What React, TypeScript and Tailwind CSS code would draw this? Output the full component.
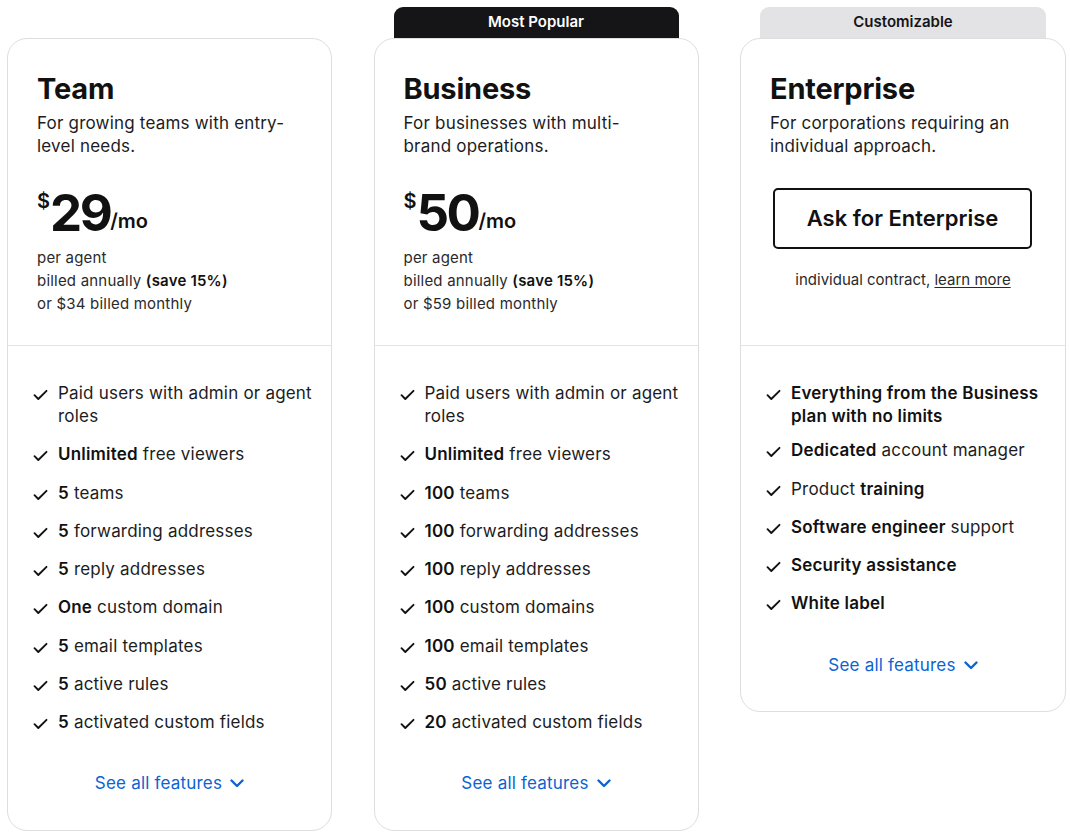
import { ReactNode } from "react";

type Plan = {
  name: string;
  desc: ReactNode;
  banner?: { text: string; dark: boolean };
  price?: { amount: string; monthly: string };
  features: ReactNode[];
};

const plans: Plan[] = [
  {
    name: "Team",
    desc: <>For growing teams with entry-<br />level needs.</>,
    price: { amount: "29", monthly: "34" },
    features: [
      <>Paid users with admin or agent roles</>,
      <><b>Unlimited</b> free viewers</>,
      <><b>5</b> teams</>,
      <><b>5</b> forwarding addresses</>,
      <><b>5</b> reply addresses</>,
      <><b>One</b> custom domain</>,
      <><b>5</b> email templates</>,
      <><b>5</b> active rules</>,
      <><b>5</b> activated custom fields</>,
    ],
  },
  {
    name: "Business",
    desc: <>For businesses with multi-<br />brand operations.</>,
    banner: { text: "Most Popular", dark: true },
    price: { amount: "50", monthly: "59" },
    features: [
      <>Paid users with admin or agent roles</>,
      <><b>Unlimited</b> free viewers</>,
      <><b>100</b> teams</>,
      <><b>100</b> forwarding addresses</>,
      <><b>100</b> reply addresses</>,
      <><b>100</b> custom domains</>,
      <><b>100</b> email templates</>,
      <><b>50</b> active rules</>,
      <><b>20</b> activated custom fields</>,
    ],
  },
  {
    name: "Enterprise",
    desc: <>For corporations requiring an<br />individual approach.</>,
    banner: { text: "Customizable", dark: false },
    features: [
      <b className="block mb-[-4px]">Everything from the Business plan with no limits</b>,
      <><b>Dedicated</b> account manager</>,
      <>Product <b>training</b></>,
      <><b>Software engineer</b> support</>,
      <b>Security assistance</b>,
      <b>White label</b>,
    ],
  },
];

function Check() {
  return (
    <svg width="15" height="12" viewBox="0 0 15 12" fill="none" className="shrink-0 mt-[7px]">
      <path d="M1.5 6.2 5.3 10 13.5 1.8" stroke="#111" strokeWidth="1.9" strokeLinecap="round" strokeLinejoin="round" />
    </svg>
  );
}

function Chevron() {
  return (
    <svg width="14" height="9" viewBox="0 0 14 9" fill="none">
      <path d="M1.5 1.5 7 7l5.5-5.5" stroke="#0b63d4" strokeWidth="2.4" strokeLinecap="round" strokeLinejoin="round" />
    </svg>
  );
}

function Card({ plan }: { plan: Plan }) {
  return (
    <div className="flex flex-col">
      <div className="h-[31px] px-[20px]">
        {plan.banner && (
          <div
            className={
              plan.banner.dark
                ? "h-full rounded-t-[9px] bg-[#151517] text-white text-[15px] font-semibold flex items-center justify-center"
                : "h-full rounded-t-[9px] bg-[#e3e3e5] text-[#151517] text-[15px] font-semibold flex items-center justify-center"
            }
          >
            {plan.banner.text}
          </div>
        )}
      </div>
      <div
        className={
          plan.price
            ? "flex-1 rounded-[20px] border border-[#dedee0] bg-white flex flex-col"
            : "rounded-[20px] border border-[#dedee0] bg-white flex flex-col"
        }
      >
        <div className="h-[307px] pl-[29px] pr-[20px] pt-[32px] border-b border-[#e3e3e5]">
          <h2 className="text-[29px] leading-[36px] font-bold text-[#111] tracking-[-0.2px]">{plan.name}</h2>
          <p className="mt-[5px] text-[17px] leading-[23px] tracking-[0.2px] text-[#1c1c1e]">{plan.desc}</p>
          {plan.price ? (
            <>
              <div className="mt-[33px] flex items-start h-[50px]">
                <span className="text-[20px] leading-[22px] font-semibold text-[#111] mt-[-1px]">$</span>
                <span className="text-[51px] leading-[44px] font-bold tracking-[-2.5px] text-[#111]">{plan.price.amount}</span>
                <span className="text-[20px] leading-[22px] font-semibold text-[#111] mt-[19px]">/mo</span>
              </div>
              <div className="mt-[5px] text-[15px] leading-[23px] tracking-[0.2px] text-[#2a2a2c]">
                <div>per agent</div>
                <div>billed annually <b className="font-semibold text-[#111]">(save 15%)</b></div>
                <div>or ${plan.price.monthly} billed monthly</div>
              </div>
            </>
          ) : (
            <>
              <button className="mt-[30px] ml-[3px] w-[259px] h-[61px] rounded-[5px] border-2 border-[#111] text-[22px] font-semibold text-[#111]">
                Ask for Enterprise
              </button>
              <div className="mt-[19px] text-center text-[15px] leading-[23px] text-[#2a2a2c] pr-[9px]">
                individual contract, <span className="underline underline-offset-2">learn more</span>
              </div>
            </>
          )}
        </div>
        <ul className="pt-[36px] pl-[25px] pr-[12px] flex flex-col gap-[15.25px] text-[17px] leading-[23px] tracking-[0.2px] text-[#1c1c1e]">
          {plan.features.map((f, i) => (
            <li key={i} className="flex gap-[10px] [&_b]:font-semibold [&_b]:text-[#111]">
              <Check />
              <span>{f}</span>
            </li>
          ))}
        </ul>
        <div className={plan.price ? "mt-auto pt-[38px] pb-[35px]" : "pt-[39px] pb-[34px]"}>
          <a className="flex items-center justify-center gap-[8px] text-[17px] leading-[23px] tracking-[0.2px] text-[#0b63d4] cursor-pointer">
            See all features <Chevron />
          </a>
        </div>
      </div>
    </div>
  );
}

export default function App() {
  return (
    <div className="w-[1070px] h-[836px] bg-white pt-[7px] pl-[7px] font-['Inter','Liberation_Sans',sans-serif]">
      <div className="grid grid-cols-[325px_325px_326px] gap-[41.5px] items-start h-[825px]">
        <div className="h-[825px] flex flex-col"><Card plan={plans[0]} /></div>
        <div className="h-[825px] flex flex-col"><Card plan={plans[1]} /></div>
        <Card plan={plans[2]} />
      </div>
    </div>
  );
}
